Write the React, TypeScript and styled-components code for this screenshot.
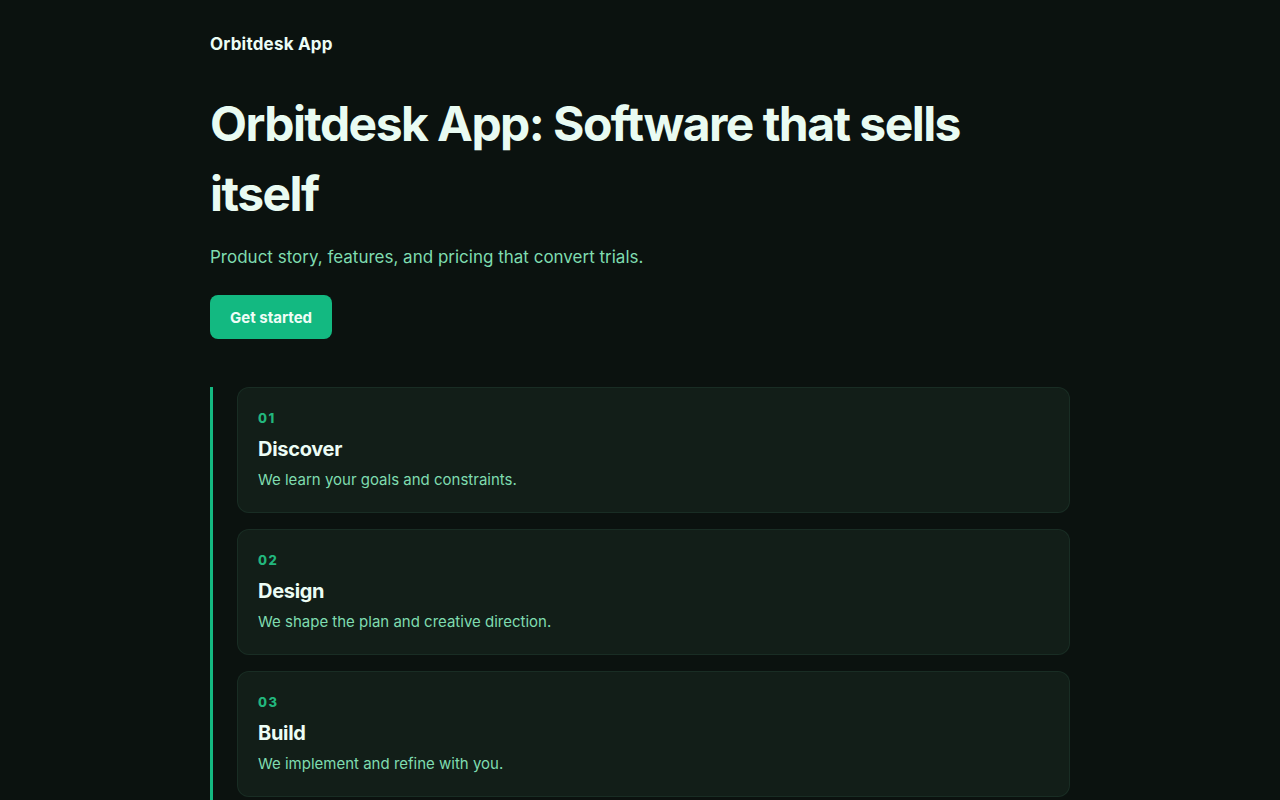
import React from 'react';
import styled, { createGlobalStyle } from 'styled-components';

const steps = [
  { num: '01', title: 'Discover', text: 'We learn your goals and constraints.' },
  { num: '02', title: 'Design', text: 'We shape the plan and creative direction.' },
  { num: '03', title: 'Build', text: 'We implement and refine with you.' },
];

const GlobalStyle = createGlobalStyle`
  html, body {
    margin: 0;
    padding: 0;
    background: #0b120f;
  }

  body {
    font-family: Inter, "Noto Sans", "Liberation Sans", sans-serif;
    color: #ecfdf5;
  }
`;

const App = () => {
  return (
    <>
      <GlobalStyle />
      <Page>
        <Brand>Orbitdesk App</Brand>
        <Hero>
          <Title>Orbitdesk App: Software that sells itself</Title>
          <Lead>Product story, features, and pricing that convert trials.</Lead>
          <PrimaryButton type="button">Get started</PrimaryButton>
        </Hero>
        <Timeline>
          {steps.map((step) => (
            <StepCard key={step.num}>
              <StepNumber>{step.num}</StepNumber>
              <StepTitle>{step.title}</StepTitle>
              <StepText>{step.text}</StepText>
            </StepCard>
          ))}
        </Timeline>
      </Page>
    </>
  );
};

const Page = styled.main`
  width: 860px;
  margin: 0 auto;
  padding: 34px 0 40px;
  box-sizing: border-box;
`;

const Brand = styled.div`
  font-size: 17px;
  font-weight: 700;
  letter-spacing: 0.2px;
  line-height: 20px;
  color: #ecfdf5;
`;

const Hero = styled.section`
  margin-top: 35px;
  display: flex;
  flex-direction: column;
  align-items: flex-start;
`;

const Title = styled.h1`
  margin: 0;
  max-width: 800px;
  font-size: 48px;
  line-height: 70px;
  font-weight: 700;
  letter-spacing: -1.55px;
  color: #e9fbf2;
`;

const Lead = styled.p`
  margin: 15px 0 0;
  font-size: 17px;
  line-height: 26px;
  color: #7fdcb0;
`;

const PrimaryButton = styled.button`
  margin-top: 25px;
  height: 44px;
  padding: 0 20px;
  border: none;
  border-radius: 8px;
  background: #13b981;
  color: #f0fdf7;
  font-family: inherit;
  font-size: 15px;
  font-weight: 700;
  cursor: pointer;
`;

const Timeline = styled.section`
  margin-top: 48px;
  border-left: 3px solid #14b981;
  padding: 0 0 16px 24px;
  display: flex;
  flex-direction: column;
  gap: 16px;
`;

const StepCard = styled.article`
  padding: 21px 20px 21px;
  border: 1px solid rgba(110, 231, 183, 0.08);
  border-radius: 12px;
  background: #121e18;
  display: flex;
  flex-direction: column;
`;

const StepNumber = styled.span`
  font-size: 13px;
  line-height: 18px;
  font-weight: 800;
  letter-spacing: 1.4px;
  color: #22b67d;
`;

const StepTitle = styled.h3`
  margin: 8px 0 0;
  font-size: 20px;
  line-height: 28px;
  font-weight: 700;
  letter-spacing: -0.3px;
  color: #ecfdf5;
`;

const StepText = styled.p`
  margin: 6px 0 0;
  font-size: 15px;
  line-height: 22px;
  color: #7fdcb0;
`;

export default App;
